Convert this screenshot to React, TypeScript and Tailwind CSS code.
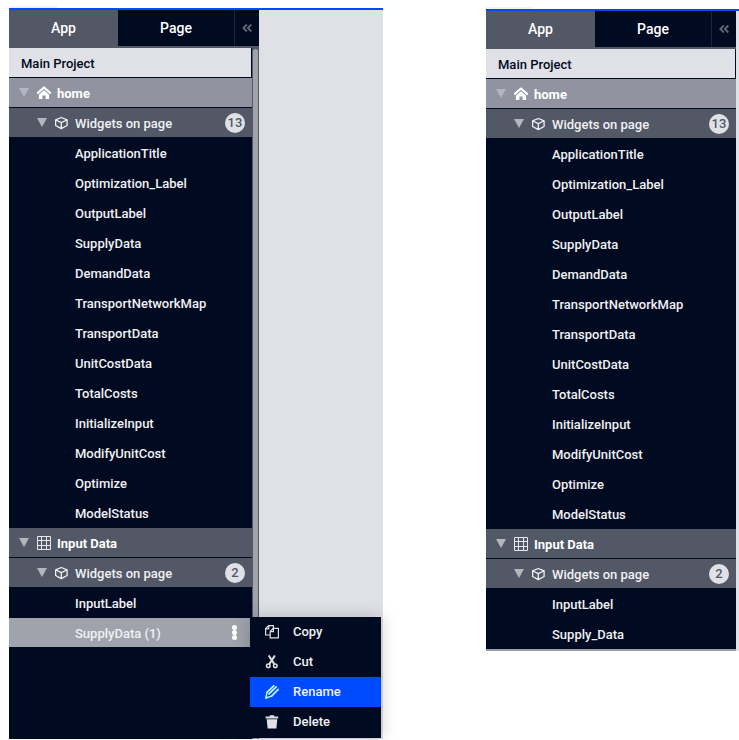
import type { ReactNode } from "react";

const pageWidgets = [
  "ApplicationTitle",
  "Optimization_Label",
  "OutputLabel",
  "SupplyData",
  "DemandData",
  "TransportNetworkMap",
  "TransportData",
  "UnitCostData",
  "TotalCosts",
  "InitializeInput",
  "ModifyUnitCost",
  "Optimize",
  "ModelStatus",
];

function Caret() {
  return (
    <svg viewBox="0 0 10 9" className="h-[9px] w-[10px] shrink-0" fill="#b4b6bd" aria-hidden="true">
      <path d="M0 0h10L5 9z" />
    </svg>
  );
}

function HomeIcon() {
  return (
    <svg viewBox="0 0 14 14" className="size-3.5 shrink-0" aria-hidden="true">
      <path d="M.9 6.9 7 1.5l6.1 5.4" fill="none" stroke="#fff" strokeWidth="2.2" strokeLinecap="round" strokeLinejoin="round" />
      <path d="M7 4.3 12.1 8.8v4.3H8.6V9.4H5.4v3.7H1.9V8.8z" fill="#fff" />
    </svg>
  );
}

function GridIcon() {
  return (
    <svg viewBox="0 0 14 14" className="size-3.5 shrink-0" aria-hidden="true">
      <path
        d="M.5.5h13v13H.5zM4.5.5v13M9.5.5v13M.5 4.5h13M.5 9.5h13"
        fill="none"
        stroke="#e6e7ea"
        strokeWidth="1"
      />
    </svg>
  );
}

function CubeIcon() {
  return (
    <svg viewBox="0 0 14 14" className="size-3.5 shrink-0" aria-hidden="true">
      <path
        d="M6.3 1.5 12.1 3.8v5.7L6.3 12.6.6 9.5V3.8zM.8 4 6.3 6.6 11.9 4M6.3 6.6v5.8"
        fill="none"
        stroke="#f0f1f3"
        strokeWidth="1.3"
        strokeLinejoin="round"
      />
    </svg>
  );
}

function CopyIcon() {
  return (
    <svg viewBox="0 0 14 14" className="size-3.5" fill="none" stroke="#dfe0e5" strokeWidth="1.2" aria-hidden="true">
      <path d="M5 10H.6V3.6L3.6.6h4.8v2.6M3.8.8v3H.8" />
      <path d="M5.2 12.8V6.4l3-3h5.2v9.4zM8.4 3.6v3H5.4" />
    </svg>
  );
}

function CutIcon() {
  return (
    <svg viewBox="0 0 14 14" className="size-3.5" fill="none" stroke="#dfe0e5" strokeWidth="1.5" aria-hidden="true">
      <circle cx="3.3" cy="10.8" r="1.8" />
      <circle cx="10.3" cy="10.8" r="1.8" />
      <path d="M4.3 9.1 9.9.5M9.3 9.1 3.7.5" strokeWidth="2" />
    </svg>
  );
}

function PencilIcon() {
  return (
    <svg viewBox="0 0 14 14" className="size-3.5" fill="none" stroke="#b9f4ff" aria-hidden="true">
      <path d="M2 7.3 8.7.9M4 8.8l7.2-6.9M6.6 11.2l6.6-6.8" strokeWidth="1.8" strokeLinecap="round" />
      <path d="M2 7.3.9 13l5.7-1.8" strokeWidth="1.4" />
      <path d="M.2 13.8 1 10.4l2.6 2.5z" fill="#b9f4ff" stroke="none" />
    </svg>
  );
}

function TrashIcon() {
  return (
    <svg viewBox="0 0 14 14" className="size-3.5" fill="#e0e1e6" aria-hidden="true">
      <path d="M.6 1.4h4.2V.2h4.4v1.2h4v2H.6zM1.7 4.2h10.6L11.4 13.4H2.6z" />
    </svg>
  );
}

function Collapse() {
  return (
    <button type="button" aria-label="Collapse panel" className="flex w-[25px] items-center justify-center border-l border-[#1d2438]">
      <svg viewBox="0 0 10 8" className="h-2 w-2.5" fill="none" stroke="#646a7a" strokeWidth="1.8" aria-hidden="true">
        <path d="M4.8.5 1.4 4l3.4 3.5M9.3.5 5.9 4l3.4 3.5" />
      </svg>
    </button>
  );
}

function GroupRow({ icon, label, tone }: { icon: ReactNode; label: string; tone: "page" | "current" }) {
  return (
    <button
      type="button"
      className={`flex h-[30px] w-full items-center border-b border-[#000a21] pl-2.5 font-bold text-white ${
        tone === "current" ? "bg-[#9293a0]" : "bg-[#525866]"
      }`}
    >
      <Caret />
      <span className="ml-2">{icon}</span>
      <span className="ml-1.5 pt-0.5">{label}</span>
    </button>
  );
}

function WidgetsRow({ count }: { count: number }) {
  return (
    <button type="button" className="flex h-[30px] w-full items-center border-b border-[#000a21] bg-[#525866] pr-[7px] pl-7">
      <Caret />
      <span className="ml-2">
        <CubeIcon />
      </span>
      <span className="ml-1.5 pt-0.5">Widgets on page</span>
      <span className="ml-auto flex size-5 items-center justify-center rounded-full bg-[#e0e1e6] text-[#525866]">{count}</span>
    </button>
  );
}

function WidgetItem({ label }: { label: string }) {
  return (
    <li>
      <button type="button" className="flex h-[30px] w-full items-center pt-0.5 pl-[66px]">
        {label}
      </button>
    </li>
  );
}

function MenuItem({ icon, label, active = false }: { icon: ReactNode; label: string; active?: boolean }) {
  return (
    <button
      type="button"
      role="menuitem"
      className={`flex h-[30px] w-full items-center gap-3.5 pl-[15px] ${active ? "bg-[#004bff]" : ""}`}
    >
      {icon}
      <span>{label}</span>
    </button>
  );
}

function ContextMenu() {
  return (
    <div role="menu" className="absolute -top-px left-[241px] z-10 w-[131px] bg-[#000a21] pb-px shadow-[0_0_16px_rgba(0,0,0,0.2)]">
      <MenuItem icon={<CopyIcon />} label="Copy" />
      <MenuItem icon={<CutIcon />} label="Cut" />
      <MenuItem icon={<PencilIcon />} label="Rename" active />
      <MenuItem icon={<TrashIcon />} label="Delete" />
    </div>
  );
}

function SelectedItem() {
  return (
    <li className="relative">
      <div className="flex h-[29px] items-center bg-[#a0a3ac] pr-[15px] pl-[66px]">
        <button type="button" className="pt-0.5">
          SupplyData (1)
        </button>
        <button type="button" aria-label="More actions" className="ml-auto flex flex-col items-center">
          <span className="size-[5px] rounded-full bg-white" />
          <span className="size-[5px] rounded-full bg-white" />
          <span className="size-[5px] rounded-full bg-white" />
        </button>
      </div>
      <ContextMenu />
    </li>
  );
}

function Explorer({ lastItem, scrollable = false }: { lastItem: ReactNode; scrollable?: boolean }) {
  return (
    <aside className="flex w-[250px] shrink-0 flex-col bg-[#000a21] text-[13px] leading-[30px] font-medium text-[#f0f1f3]">
      <div role="tablist" className="flex h-[38px] border-b-2 border-[#525866] text-sm text-white">
        <button type="button" role="tab" aria-selected="true" className="w-[109px] bg-[#525866]">
          App
        </button>
        <button type="button" role="tab" aria-selected="false" className="flex-1">
          Page
        </button>
        <Collapse />
      </div>
      <div className="flex flex-1">
        <nav className="min-w-0 flex-1">
          <h2 className="mr-px flex h-[30px] items-center border-b border-[#000a21] bg-[#e0e1e6] pt-0.5 pl-3 text-[#000a21]">
            Main Project
          </h2>
          <GroupRow icon={<HomeIcon />} label="home" tone="current" />
          <WidgetsRow count={13} />
          <ul>
            {pageWidgets.map((name) => (
              <WidgetItem key={name} label={name} />
            ))}
          </ul>
          <GroupRow icon={<GridIcon />} label="Input Data" tone="page" />
          <WidgetsRow count={2} />
          <ul>
            <WidgetItem label="InputLabel" />
            {lastItem}
          </ul>
        </nav>
        {scrollable && (
          <div className="w-[7px] bg-[#525866] px-px pt-px">
            <div className="h-full rounded-t-full bg-[#a0a3ac]" />
          </div>
        )}
      </div>
    </aside>
  );
}

export default function App() {
  return (
    <main className="flex min-h-screen items-start gap-[103px] bg-white pt-1.5 pb-px pl-[9px] font-[Roboto,sans-serif]">
      <section className="flex flex-1 flex-col self-stretch">
        <div className="h-0.5 w-12 bg-[#f2f2f3]" />
        <div className="h-0.5 bg-[#004bff]" />
        <div className="flex flex-1 bg-[#e0e1e6]">
          <Explorer scrollable lastItem={<SelectedItem />} />
        </div>
      </section>
      <section className="mt-px w-[253px] shrink-0">
        <div className="h-0.5 w-12 bg-[#f2f2f3]" />
        <div className="h-0.5 bg-[#004bff]" />
        <div className="flex bg-[#e0e1e6]">
          <div className="border-b-2 border-[#9c9fab]">
            <Explorer lastItem={<WidgetItem label="Supply_Data" />} />
          </div>
        </div>
      </section>
    </main>
  );
}
